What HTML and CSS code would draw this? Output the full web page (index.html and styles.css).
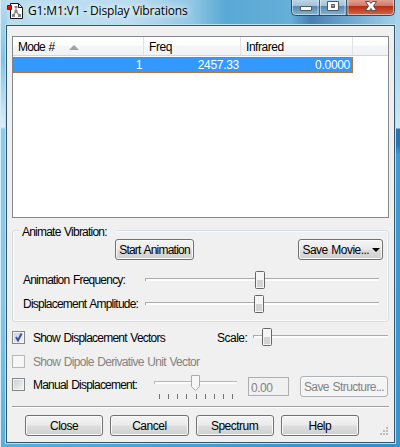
FILE: index.html
```html
<!DOCTYPE html>
<html lang="en">
<head>
<meta charset="utf-8">
<title>Display Vibrations</title>
<link rel="stylesheet" href="styles.css">
</head>
<body>
<div class="window">
  <header class="titlebar">
    <svg class="app-icon" width="17" height="19" viewBox="0 0 17 19">
      <path d="M3.500 1.500h8l4 4v11h-12z" fill="#fff" stroke="#111"/>
      <path d="M11.500 2v3.500h4" fill="none" stroke="#111"/>
      <path d="M9 5v5M9 9.500l-3 4M9 9.500l3.500 4" fill="none" stroke="#999" stroke-width="1.300"/>
      <path d="M7.500 4h3v2h-3zM7.500 8h3v3h-3zM5 12h3v3H5zM11 12h3v3h-3z" fill="#888"/>
      <path d="M.5 3.500h4v4h-4z" fill="#f00" stroke="#b00000"/>
    </svg>
    <h1 class="title">G1:M1:V1 - Display Vibrations</h1>
    <svg class="controls" width="104" height="17" viewBox="0 0 104 17">
      <defs>
        <linearGradient id="blue" x2="0" y2="1"><stop offset="0" stop-color="#bdd5e7"/><stop offset=".4" stop-color="#a2c0d6"/><stop offset=".43" stop-color="#5b87aa"/><stop offset="1" stop-color="#83b4d4"/></linearGradient>
        <linearGradient id="red" x2="0" y2="1"><stop offset="0" stop-color="#dfa092"/><stop offset=".4" stop-color="#d47764"/><stop offset=".43" stop-color="#b5301a"/><stop offset="1" stop-color="#d9633e"/></linearGradient>
      </defs>
      <path d="M1 0v11q0 4 4 4h94q4 0 4-4V0z" fill="url(#blue)"/>
      <path d="M56 0v15h43q4 0 4-4V0z" fill="url(#red)"/>
      <path d="M.5 0v11.500q0 4 4 4h95q4 0 4-4V0" fill="none" stroke="#36495c"/>
      <path d="M1.500 0v11q0 3.500 3 3.500h22.500V0M29.500 0v14.500h24.500V0M57 0v14.500h42.500q3 0 3-3.500V0" fill="none" stroke="#e2eef6" stroke-opacity=".6"/>
      <path d="M28.500 0v15M55.500 0v15" stroke="#465b6e"/>
      <path d="M9.500 6.500h11v4h-11z" fill="#fff" stroke="#4c5966"/>
      <path d="M36.500 1.500h11v9h-11zM40.500 4.500v3h3v-3z" fill="#fff" fill-rule="evenodd" stroke="#4c5966"/>
      <path d="M74.500 1.500h4l1.500 2 1.500-2h4L82.500 6l3 4.500h-4L80 8.500l-1.500 2h-4l3-4.500z" fill="#fff" stroke="#574e56"/>
    </svg>
  </header>
  <main class="client">
    <section class="list">
      <div class="list-head">
        <div class="cell mode">Mode #<svg class="sort" width="10" height="5" viewBox="0 0 10 5"><path d="M0 5l5-5 5 5z" fill="#a1a1a1"/></svg></div>
        <div class="cell freq">Freq</div>
        <div class="cell infra">Infrared</div>
      </div>
      <div class="list-row"><span class="v1">1</span><span class="v2">2457.33</span><span class="v3">0.0000</span></div>
    </section>
    <section class="group">
      <h2 class="legend"><span class="t-legend">Animate Vibration:</span></h2>
      <div class="actions">
        <button class="btn start">Start Animation</button>
        <button class="btn movie">Save Movie...<svg width="8" height="4" viewBox="0 0 8 4"><path d="M0 0h8L4 4z"/></svg></button>
      </div>
      <div class="line"><span class="t-freq">Animation Frequency:</span>
        <svg class="slider" width="235" height="20" viewBox="0 0 235 20">
          <path d="M0 8h234v3H0z" fill="#fcfcfc"/><path d="M0 8.500h234M.5 8v3" stroke="#aaa"/>
          <g transform="translate(110 1)"><rect x=".5" y=".5" width="9" height="17" rx="1" fill="#f5f5f5" stroke="#666"/><path d="M2 9h6v7H2z" fill="#d3d3d3"/></g>
        </svg></div>
      <div class="line"><span class="t-amp">Displacement Amplitude:</span>
        <svg class="slider" width="235" height="20" viewBox="0 0 235 20">
          <path d="M0 8h234v3H0z" fill="#fcfcfc"/><path d="M0 8.500h234M.5 8v3" stroke="#aaa"/>
          <g transform="translate(109 1)"><rect x=".5" y=".5" width="9" height="17" rx="1" fill="#f5f5f5" stroke="#666"/><path d="M2 9h6v7H2z" fill="#d3d3d3"/></g>
        </svg></div>
    </section>
    <div class="option">
      <span class="check"><svg width="11" height="11" viewBox="0 0 11 11"><path d="M3 5l2 3.500L8.500 1.500" fill="none" stroke="#414f9b" stroke-width="2"/></svg></span>
      <span class="t-vec">Show Displacement Vectors</span>
      <span class="t-scale">Scale:</span>
      <svg class="scale" width="136" height="20" viewBox="0 0 136 20">
        <path d="M0 8h135v3H0z" fill="#fcfcfc"/><path d="M0 8.500h135M.5 8v3" stroke="#aaa"/>
        <g transform="translate(9 1)"><rect x=".5" y=".5" width="9" height="17" rx="1" fill="#f5f5f5" stroke="#666"/><path d="M2 9h6v7H2z" fill="#d3d3d3"/></g>
      </svg>
    </div>
    <div class="option">
      <span class="check off"></span><span class="t-dipole">Show Dipole Derivative Unit Vector</span>
    </div>
    <div class="option manual">
      <span class="check"></span><span class="t-manual">Manual Displacement:</span>
      <svg class="ticks" width="84" height="28" viewBox="0 0 84 28">
        <path d="M0 7h83v3H0z" fill="#fcfcfc"/><path d="M0 7.500h83M.5 7v3" stroke="#b8b8b8"/>
        <path d="M37.500 1.500h8v11l-4 4-4-4z" fill="#f6f6f6" stroke="#aaa"/>
        <path d="M5.500 20v5M14.500 20v5M23.500 20v5M32.500 20v5M42.500 20v5M51.500 20v5M60.500 20v5M69.500 20v5M78.500 20v5" stroke="#737373"/>
      </svg>
      <span class="field">0.00</span>
      <button class="btn structure" disabled>Save Structure...</button>
    </div>
    <footer class="footer">
      <button class="btn">Close</button><button class="btn">Cancel</button><button class="btn">Spectrum</button><button class="btn">Help</button>
      <svg class="grip" width="9" height="9" viewBox="0 0 9 9"><path d="M6 0h2v2H6zM3 3h2v2H3zM6 3h2v2H6zM0 6h2v2H0zM3 6h2v2H3zM6 6h2v2H6z" fill="#bdbdbd"/></svg>
    </footer>
  </main>
</div>
</body>
</html>
```
FILE: styles.css
```css
* { box-sizing: border-box; }
body {
  margin: 0;
  font: 12px/14px "Liberation Sans", Arial, sans-serif;
  letter-spacing: -.78px;
  word-spacing: 1px;
  color: #000;
  white-space: nowrap;
}
h1, h2 { margin: 0; font: inherit; }
svg { display: block; flex: none; }
.window {
  width: 400px;
  height: 447px;
  padding: 0 5px 4px 6px;
  background:
    linear-gradient(#a5cfe8 0, #b5d9ed 75px, #cfe7f2 128px, #2d71ad 129px, #2d71ad 145px, #409bd2 155px, #3994cd 447px) right / 5px 100% no-repeat,
    linear-gradient(#b8dcee 0, #7ec5e9 60px, #dceff8 127px, #8bcaec 129px, #85c8ec 300px, #58b0dc 447px) left / 6px 100% no-repeat,
    linear-gradient(90deg, #56b0dc, #318dc8) bottom / 100% 5px no-repeat,
    linear-gradient(90deg, #b9ddef 0, #bbddef 130px, #92c8e5 190px, #59a8d5 225px, #65afd8 290px, #477fb1 310px, #679fc9 340px, #9ccce6 390px);
  border-left: 1px solid #d9edf7;
}
.titlebar { display: flex; height: 25px; }
.app-icon { margin-top: 2px; }
.title { margin: 3px 0 0 4px; width: 170px; font: 12px/16px "Open Sans", sans-serif; letter-spacing: -.15px; word-spacing: 0; text-shadow: 0 0 6px #fff, 0 0 8px #fff; }
.controls { margin-left: 93px; }
.client {
  width: 389px;
  height: 418px;
  margin-left: -1px;
  padding: 10px 5px 0;
  border: 1px solid #31566d;
  background: #f0f0f0;
  box-shadow: 0 0 0 1px #b9e1ee;
}
.list { width: 377px; height: 182px; border: 1px solid #828790; background: #fff; }
.list-head { display: flex; height: 19px; background: linear-gradient(#fff 45%, #f5f6f7 50%, #f1f2f4); border-bottom: 1px solid #d5d5d5; }
.cell { padding: 3px 0 0 5px; border-right: 1px solid #dfe3e8; letter-spacing: -.45px; }
.mode { display: flex; width: 131px; letter-spacing: -.75px; }
.sort { margin: 5px 0 0 14px; }
.freq { width: 97px; }
.infra { width: 112px; }
.list-row { display: flex; width: 340px; height: 16px; margin-top: 1px; border: 1px dotted #b3743c; background: #39f; color: #fff; text-align: right; letter-spacing: -.3px; }
.v1 { width: 128px; }
.v2 { width: 97px; }
.v3 { width: 111px; }
.group { width: 377px; height: 92px; margin-top: 12px; border: 1px solid #d5dfe5; border-radius: 3px; box-shadow: inset 0 0 0 1px #fafafa; }
.legend { width: 97px; height: 14px; margin: -6px 0 0 7px; padding-left: 2px; background: #f0f0f0; }
.actions { display: flex; height: 31px; }
.btn {
  width: 79px;
  height: 21px;
  padding: 0;
  border: 1px solid #707070;
  border-radius: 3px;
  background: linear-gradient(#f3f3f3, #ebebeb 49%, #dedede 51%, #cfcfcf);
  box-shadow: inset 0 0 0 1px #fafafa;
  font: inherit;
  letter-spacing: inherit;
  word-spacing: inherit;
  color: #000;
}
.start { margin-left: 102px; }
.movie { display: flex; align-items: center; justify-content: flex-end; width: 85px; margin-left: 104px; padding-right: 2px; letter-spacing: -.55px; }
.movie svg { margin-left: 3px; }
.line { display: flex; height: 24px; padding: 3px 0 0 10px; }
.line span { width: 122px; }
.slider { margin-top: -3px; }
.option { display: flex; height: 24px; padding-top: 9px; }
.check { width: 13px; height: 13px; flex: none; border: 1px solid #858787; background: linear-gradient(135deg, #c7ced4, #f6f6f6); box-shadow: inset 0 0 0 1px #f4f4f4; }
.off { border-color: #b8b8b8; background: #f7f7f7; }
.option > .check + span { margin: 0 0 0 8px; }
.t-vec { width: 184px; }
.t-scale { width: 36px; letter-spacing: -.5px; }
.scale { margin-top: -4px; }
.t-dipole { color: #838383; letter-spacing: -.7px; }
.manual { height: 36px; padding-top: 8px; }
.t-manual { width: 121px; }
.ticks { margin-top: -4px; }
.field { width: 41px; height: 19px; margin: -1px 0 0 10px; padding: 3px 0 0 2px; border: 1px solid #afafaf; color: #838383; letter-spacing: -.5px; }
.structure { width: 88px; margin: -2px 0 0 11px; border-color: #adb2b5; background: #f4f4f4; color: #838383; letter-spacing: -.6px; }
.footer { display: flex; gap: 7px; width: 377px; border-top: 1px solid #a0a0a0; padding: 8px 0 0 13px; box-shadow: inset 0 1px #fff; letter-spacing: -.5px; }
.grip { margin: 12px 0 0 14px; }
```
